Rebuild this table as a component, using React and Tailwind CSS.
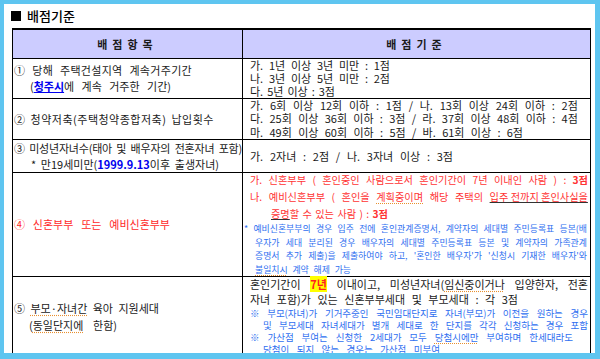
import React from "react";

const spell = "underline decoration-dotted decoration-[#e89030] underline-offset-2";

// one line of the document; words are spread across the width the line has in the scan
const Ln = ({ w, className = "", t }) => {
  const words = typeof t === "string" ? t.split(" ") : t;
  return (
    <div className={`flex justify-between whitespace-nowrap ${w} ${className}`}>
      {words.map((word, i) => (
        <span key={i}>{word}</span>
      ))}
    </div>
  );
};

const Row = ({ left, right, h, rightClass = "" }) => (
  <tr>
    <td className={`border border-black align-middle pl-[1px] ${h}`}>{left}</td>
    <td className={`border border-black ${rightClass}`}>{right}</td>
  </tr>
);

export default function App() {
  return (
    <div className="w-[600px] h-[359px] bg-[#5ec5f0] p-[4px] overflow-hidden font-['Noto_Sans_CJK_KR',sans-serif] text-[#1a1a1a]">
      <div className="w-[591px] h-[349px] bg-white overflow-hidden pl-[8px]">
        <div className="h-[24px] flex items-center gap-[6px] text-[13px] font-medium text-black">
          <span className="w-[10px] h-[10px] bg-black -ml-[1px]" />
          <span>배점기준</span>
        </div>
        <table className="border-collapse table-fixed w-[578px] border-t-2 border-black">
          <colgroup>
            <col className="w-[230px]" />
            <col className="w-[348px]" />
          </colgroup>
          <tbody>
            <tr className="bg-[#ccccff]">
              <td className="border border-black h-[29px] text-center text-[11px] font-bold tracking-[5px]">배점항목</td>
              <td className="border border-black text-center text-[11px] font-bold tracking-[5px]">배점기준</td>
            </tr>
            <Row
              h="h-[40px]"
              rightClass="pl-[7px] text-[11px] leading-[13px]"
              left={
                <div className="text-[11px] leading-[16px]">
                  <Ln w="w-[178px]" className="tracking-[0.3px]" t="① 당해 주택건설지역 계속거주기간" />
                  <Ln
                    w="w-[141px]"
                    className="ml-[16px]"
                    t={[
                      <>
                        (<span className="text-[#0000ee] font-bold underline">청주시</span>에
                      </>,
                      "계속",
                      "거주한",
                      "기간)",
                    ]}
                  />
                </div>
              }
              right={
                <div>
                  <Ln w="w-[140px]" t="가. 1년 이상 3년 미만 : 1점" />
                  <Ln w="w-[140px]" t="나. 3년 이상 5년 미만 : 2점" />
                  <Ln w="w-[85px]" t="다. 5년 이상 : 3점" />
                </div>
              }
            />
            <Row
              h="h-[41px]"
              rightClass="pl-[7px] text-[11px] leading-[13.5px]"
              left={<Ln w="w-[200px]" className="text-[11px] tracking-[0.5px]" t="② 청약저축(주택청약종합저축) 납입횟수" />}
              right={
                <div>
                  <Ln w="w-[328px]" t="가. 6회 이상 12회 이하 : 1점 / 나. 13회 이상 24회 이하 : 2점" />
                  <Ln w="w-[328px]" t="다. 25회 이상 36회 이하 : 3점 / 라. 37회 이상 48회 이하 : 4점" />
                  <Ln w="w-[273px]" t="마. 49회 이상 60회 이하 : 5점 / 바. 61회 이상 : 6점" />
                </div>
              }
            />
            <Row
              h="h-[32px]"
              rightClass="pl-[7px] text-[11px]"
              left={
                <div className="text-[11px] leading-[16px]">
                  <Ln w="w-[228px]" className="tracking-[-0.2px]" t="③ 미성년자녀수(태아 및 배우자의 전혼자녀 포함)" />
                  <Ln
                    w="w-[188px]"
                    className="ml-[17px]"
                    t={[
                      "*",
                      <>
                        만19세미만(<span className="text-[#0000ee] font-bold">1999.9.13</span>이후
                      </>,
                      "출생자녀)",
                    ]}
                  />
                </div>
              }
              right={<Ln w="w-[203px]" t="가. 2자녀 : 2점 / 나. 3자녀 이상 : 3점" />}
            />
            <Row
              h="h-[103px]"
              rightClass="align-top"
              left={<Ln w="w-[156px]" className="text-[11px] text-[#ff2a2a]" t="④ 신혼부부 또는 예비신혼부부" />}
              right={
                <div>
                  <div className="-mt-[2px] pl-[7px] text-[10.2px] leading-[17px] text-[#ff3333]">
                    <Ln
                      w="w-[338px]"
                      t={[
                        ..."가. 신혼부부 ( 혼인중인 사람으로서 혼인기간이 7년 이내인 사람 ) :".split(" "),
                        <b>3점</b>,
                      ]}
                    />
                    <Ln
                      w="w-[338px]"
                      t={[
                        ..."나. 예비신혼부부 ( 혼인을".split(" "),
                        <span className={spell}>계획중이며</span>,
                        "해당",
                        "주택의",
                        <span className="underline decoration-[#333]">입주 전까지 혼인사실을</span>,
                      ]}
                    />
                    <Ln
                      w="w-[117px]"
                      className="ml-[21px]"
                      t={[
                        <>
                          <span className="underline decoration-[#333]">증명</span>할
                        </>,
                        ..."수 있는 사람 ) :".split(" "),
                        <b>3점</b>,
                      ]}
                    />
                  </div>
                  <div className="pl-[1px] text-[8.9px] leading-[13.5px] text-[#2f6ff0]">
                    <Ln w="w-[343px]" t="* 예비신혼부부의 경우 입주 전에 혼인관계증명서, 계약자의 세대별 주민등록표 등본(배" />
                    <Ln w="w-[332px]" className="ml-[11px]" t="우자가 세대 분리된 경우 배우자의 세대별 주민등록표 등본 및 계약자의 가족관계" />
                    <Ln w="w-[332px]" className="ml-[11px]" t="증명서 추가 제출)을 제출하여야 하고, '혼인한 배우자'가 '신청시 기재한 배우자'와" />
                    <Ln
                      w="w-[96px]"
                      className="ml-[11px]"
                      t={[<span className={spell}>불일치시</span>, "계약", "해제", "가능"]}
                    />
                  </div>
                </div>
              }
            />
            <Row
              h="h-[80px]"
              rightClass="align-top"
              left={
                <div className="text-[11px] leading-[17px]">
                  <Ln w="w-[145px]" t={["⑤", <span className={spell}>부모·자녀간</span>, "육아", "지원세대"]} />
                  <Ln
                    w="w-[88px]"
                    className="ml-[15px]"
                    t={[
                      <>
                        (<span className={spell}>동일단지에</span>
                      </>,
                      "한함)",
                    ]}
                  />
                </div>
              }
              right={
                <div>
                  <div className="pl-[7px] text-[11px] leading-[15px]">
                    <Ln
                      w="w-[338px]"
                      t={[
                        "혼인기간이",
                        <span className="bg-[#ffff00] text-[#ff2020] font-bold">7년</span>,
                        "이내이고,",
                        <>
                          미성년자녀(<span className={spell}>임신중이거나</span>
                        </>,
                        "입양한자,",
                        "전혼",
                      ]}
                    />
                    <Ln w="w-[268px]" t="자녀 포함)가 있는 신혼부부세대 및 부모세대 : 각 3점" />
                  </div>
                  <div className="pl-[7px] text-[9.5px] leading-[12px] text-[#2f6ff0]">
                    <Ln w="w-[338px]" t="※ 부모(자녀)가 기거주중인 국민임대단지로 자녀(부모)가 이전을 원하는 경우" />
                    <Ln w="w-[325px]" className="ml-[13px]" t="및 부모세대 자녀세대가 별개 세대로 한 단지를 각각 신청하는 경우 포함" />
                    <Ln
                      w="w-[323px]"
                      t={[
                        ..."※ 가산점 부여는 신청한 2세대가 모두".split(" "),
                        <span className={spell}>당첨시에만</span>,
                        "부여하며",
                        "한세대라도",
                      ]}
                    />
                    <Ln w="w-[177px]" className="ml-[13px]" t="당첨이 되지 않는 경우는 가산점 미부여" />
                  </div>
                </div>
              }
            />
          </tbody>
        </table>
      </div>
    </div>
  );
}
